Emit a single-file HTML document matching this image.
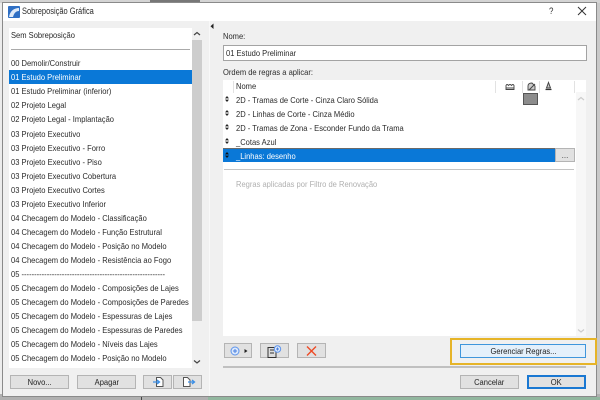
<!DOCTYPE html>
<html><head><meta charset="utf-8">
<style>
html,body{margin:0;padding:0;background:#c4c4c4}
#w{width:600px;height:400px;position:absolute;left:0;top:0;overflow:hidden;background:#c9c9c9;font-family:"Liberation Sans",sans-serif;font-size:8.6px;color:#2a2a2a;filter:blur(.3px)}
div{position:absolute;box-sizing:border-box}
.t{white-space:nowrap;line-height:12px;height:12px;transform:scaleX(.88);transform-origin:0 50%}
.btn{background:#e1e1e1;border:1px solid #b4b4b4;text-align:center;color:#222}
.btn span{display:inline-block;transform:scaleX(.88);white-space:nowrap}
</style></head><body><div id="w">
<div style="left:0;top:0;width:3px;height:400px;background:#ececec"></div>
<div style="left:0;top:0;width:600px;height:3px;background:#d4d4d4"></div>
<div style="left:150px;top:0;width:50px;height:2px;background:#777"></div>
<div style="left:0;top:394px;width:600px;height:6px;background:#b0b0b0"></div>
<div style="left:141px;top:396px;width:1px;height:4px;background:#444"></div>
<div style="left:208px;top:397px;width:392px;height:3px;background:#92b79f"></div>
<div style="left:2px;top:2px;width:595px;height:395px;background:#f0f0f0;border:1px solid #8a8a8a"></div>
<div style="left:3px;top:3px;width:593px;height:18px;background:#fff"></div>

<svg style="position:absolute;left:8px;top:6px" width="12" height="12" viewBox="0 0 12 12"><rect width="12" height="12" rx="1" fill="#2f6fc4"/><path d="M1 11C2 5 6 2 11 2V5C8 5 6 7 5 11Z" fill="#dfeaf8"/></svg>
<div class="t" style="left:22px;top:5px;font-size:9px;transform:scaleX(.83)">Sobreposição Gráfica</div>
<div class="t" style="left:549px;top:5px;font-size:9px">?</div>
<svg style="position:absolute;left:577px;top:6px" width="10" height="10"><path d="M1 1L9 9M9 1L1 9" stroke="#333" stroke-width="1"/></svg>

<!-- left list -->
<div style="left:9px;top:28px;width:183px;height:340px;background:#fff"></div>
<div style="left:192px;top:28px;width:10px;height:340px;background:#f0f0f0"></div>
<div style="left:192px;top:40px;width:10px;height:281px;background:#cdcdcd"></div>
<svg style="position:absolute;left:193px;top:31px" width="9" height="6"><path d="M1 4L4 1.500L7 4" fill="none" stroke="#444" stroke-width="1.200"/></svg>
<svg style="position:absolute;left:193px;top:359px" width="9" height="6"><path d="M1 1.500L4 4L7 1.500" fill="none" stroke="#444" stroke-width="1.200"/></svg>
<div style="left:11px;top:49px;width:179px;height:1px;background:#aaa"></div>
<div style="left:9px;top:70px;width:183px;height:14px;background:#0a78d7"></div>
<div class="t" style="left:11px;top:29px">Sem Sobreposição</div>
<div class="t" style="left:11px;top:57px">00 Demolir/Construir</div>
<div class="t" style="left:11px;top:71px;color:#fff">01 Estudo Preliminar</div>
<div class="t" style="left:11px;top:85px">01 Estudo Preliminar (inferior)</div>
<div class="t" style="left:11px;top:99px">02 Projeto Legal</div>
<div class="t" style="left:11px;top:113px">02 Projeto Legal - Implantação</div>
<div class="t" style="left:11px;top:128px">03 Projeto Executivo</div>
<div class="t" style="left:11px;top:142px">03 Projeto Executivo - Forro</div>
<div class="t" style="left:11px;top:156px">03 Projeto Executivo - Piso</div>
<div class="t" style="left:11px;top:170px">03 Projeto Executivo Cobertura</div>
<div class="t" style="left:11px;top:184px">03 Projeto Executivo Cortes</div>
<div class="t" style="left:11px;top:198px">03 Projeto Executivo Inferior</div>
<div class="t" style="left:11px;top:212px">04 Checagem do Modelo - Classificação</div>
<div class="t" style="left:11px;top:226px">04 Checagem do Modelo - Função Estrutural</div>
<div class="t" style="left:11px;top:240px">04 Checagem do Modelo - Posição no Modelo</div>
<div class="t" style="left:11px;top:254px">04 Checagem do Modelo - Resistência ao Fogo</div>
<div class="t" style="left:11px;top:268px">05 ---------------------------------------------------------</div>
<div class="t" style="left:11px;top:282px">05 Checagem do Modelo - Composições de Lajes</div>
<div class="t" style="left:11px;top:296px">05 Checagem do Modelo - Composições de Paredes</div>
<div class="t" style="left:11px;top:310px">05 Checagem do Modelo - Espessuras de Lajes</div>
<div class="t" style="left:11px;top:324px">05 Checagem do Modelo - Espessuras de Paredes</div>
<div class="t" style="left:11px;top:338px">05 Checagem do Modelo - Níveis das Lajes</div>
<div class="t" style="left:11px;top:352px">05 Checagem do Modelo - Posição no Modelo</div>

<!-- left buttons -->
<div class="btn" style="left:10px;top:375px;width:59px;height:14px;line-height:12px"><span>Novo...</span></div>
<div class="btn" style="left:77px;top:375px;width:59px;height:14px;line-height:12px"><span>Apagar</span></div>
<div class="btn" style="left:143px;top:375px;width:29px;height:14px"></div>
<div class="btn" style="left:173px;top:375px;width:29px;height:14px"></div>
<svg style="position:absolute;left:152px;top:376px" width="14" height="12"><path d="M4.500 1.500H8.500L11 4V10.500H4.500Z" fill="#fff" stroke="#555"/><path d="M1 6H7M5 4L7.500 6L5 8" fill="none" stroke="#3a8ee6" stroke-width="1.300"/></svg>
<svg style="position:absolute;left:182px;top:376px" width="16" height="12"><path d="M1.500 1.500H5.500L8 4V10.500H1.500Z" fill="#fff" stroke="#555"/><path d="M6 6H12M10 4L12.500 6L10 8" fill="none" stroke="#3a8ee6" stroke-width="1.300"/></svg>

<!-- divider arrow -->
<div style="left:209px;top:21px;width:1px;height:375px;background:#f8f8f8"></div>
<svg style="position:absolute;left:210px;top:23px" width="4" height="7"><path d="M3.500 .5V6L.5 3.200Z" fill="#222"/></svg>

<!-- right -->
<div class="t" style="left:223px;top:30px">Nome:</div>
<div style="left:223px;top:45px;width:364px;height:16px;background:#fff;border:1px solid #a3a3a3"></div>
<div class="t" style="left:226px;top:47px">01 Estudo Preliminar</div>
<div class="t" style="left:223px;top:66px">Ordem de regras a aplicar:</div>

<div style="left:223px;top:80px;width:363px;height:256px;background:#fff"></div>
<div style="left:576px;top:92px;width:10px;height:244px;background:#f7f7f7"></div>
<div style="left:233px;top:81px;width:1px;height:12px;background:#e2e2e2"></div>
<div style="left:495px;top:81px;width:1px;height:12px;background:#e2e2e2"></div>
<div style="left:522px;top:81px;width:1px;height:12px;background:#e2e2e2"></div>
<div style="left:539px;top:81px;width:1px;height:12px;background:#e2e2e2"></div>
<div style="left:574px;top:81px;width:1px;height:12px;background:#e2e2e2"></div>
<div class="t" style="left:236px;top:80px">Nome</div>

<svg style="position:absolute;left:505px;top:82px" width="10" height="9"><path d="M1 7.500V3.500Q2 1.500 3.500 3.500Q5 1.500 6.500 3.500Q8 1.500 9 3.500V7.500Z" fill="#fff" stroke="#444" stroke-width=".9"/><path d="M1 6H9" stroke="#444"/></svg>
<svg style="position:absolute;left:527px;top:82px" width="10" height="9"><path d="M1 8V4Q1 1 5 1L8 4V8Z" fill="#ccc" stroke="#444" stroke-width=".9"/><path d="M2 8L8 2" stroke="#444"/></svg>
<svg style="position:absolute;left:544px;top:81px" width="9" height="10"><path d="M4.500 1.500L6.500 7H2.500Z" fill="#ccc" stroke="#444"/><path d="M1.500 8.500H7.500" stroke="#333" stroke-width="1.200"/></svg>
<div style="left:523px;top:93px;width:15px;height:12px;background:#8c8c8c;border:1px solid #555"></div>

<svg style="position:absolute;left:225px;top:96px" width="4" height="6"><path d="M2 0L4 2.400H0ZM2 6L0 3.600H4Z" fill="#222"/></svg>
<svg style="position:absolute;left:225px;top:110px" width="4" height="6"><path d="M2 0L4 2.400H0ZM2 6L0 3.600H4Z" fill="#222"/></svg>
<svg style="position:absolute;left:225px;top:124px" width="4" height="6"><path d="M2 0L4 2.400H0ZM2 6L0 3.600H4Z" fill="#222"/></svg>
<svg style="position:absolute;left:225px;top:138px" width="4" height="6"><path d="M2 0L4 2.400H0ZM2 6L0 3.600H4Z" fill="#222"/></svg>

<div class="t" style="left:236px;top:94px">2D - Tramas de Corte - Cinza Claro Sólida</div>
<div class="t" style="left:236px;top:108px">2D - Linhas de Corte - Cinza Médio</div>
<div class="t" style="left:236px;top:122px">2D - Tramas de Zona - Esconder Fundo da Trama</div>
<div class="t" style="left:236px;top:136px">_Cotas Azul</div>

<div style="left:223px;top:148px;width:332px;height:14px;background:#0a78d7;border-top:1px solid #6a6a6a"></div>
<svg style="position:absolute;left:225px;top:152px" width="4" height="6"><path d="M2 0L4 2.400H0ZM2 6L0 3.600H4Z" fill="#111"/></svg>
<div class="t" style="left:236px;top:150px;color:#fff">_Linhas: desenho</div>
<div class="btn" style="left:555px;top:148px;width:20px;height:14px;line-height:13px;font-size:8px;color:#444">...</div>
<div style="left:224px;top:169px;width:350px;height:1px;background:#c4c4c4"></div>
<div class="t" style="left:236px;top:178px;color:#b0b0b0">Regras aplicadas por Filtro de Renovação</div>
<svg style="position:absolute;left:577px;top:96px" width="9" height="6"><path d="M1 4L4 1.500L7 4" fill="none" stroke="#ccc" stroke-width="1.200"/></svg>
<svg style="position:absolute;left:577px;top:328px" width="9" height="6"><path d="M1 1.500L4 4L7 1.500" fill="none" stroke="#ccc" stroke-width="1.200"/></svg>

<!-- bottom-right tools -->
<div class="btn" style="left:224px;top:343px;width:28px;height:15px"></div>
<svg style="position:absolute;left:230px;top:346px" width="20" height="10"><circle cx="5" cy="5" r="4" fill="#dbe8fb" stroke="#5d94ec"/><path d="M3 5H7M5 3V7" stroke="#4a80e0"/><path d="M14.500 3L17.500 5L14.500 7Z" fill="#222"/></svg>
<div class="btn" style="left:260px;top:343px;width:29px;height:15px"></div>
<svg style="position:absolute;left:267px;top:345px" width="16" height="13"><rect x="1" y="2.500" width="8" height="10" fill="#ddd" stroke="#333"/><path d="M3 5H7M3 8H7" stroke="#333"/><circle cx="10.500" cy="4" r="3.200" fill="#dbe8fb" stroke="#5d94ec"/><path d="M9 4H12M10.500 2.500V5.500" stroke="#4a80e0"/></svg>
<div class="btn" style="left:297px;top:343px;width:29px;height:15px"></div>
<svg style="position:absolute;left:306px;top:346px" width="11" height="10"><path d="M1 .5L10 9.500M10 .5L1 9.500" stroke="#ee4a25" stroke-width="1.400"/></svg>

<!-- highlight -->
<div style="left:450px;top:338px;width:147px;height:27px;border:2px solid #e6b428"></div>
<div class="btn" style="left:460px;top:344px;width:126px;height:14px;background:#e4f0fb;border:1px solid #3f96dc;line-height:12px"><span>Gerenciar Regras...</span></div>

<div style="left:223px;top:366px;width:363px;height:2px;background:#c0c0c0"></div>
<div class="btn" style="left:460px;top:375px;width:59px;height:14px;line-height:12px"><span>Cancelar</span></div>
<div class="btn" style="left:527px;top:375px;width:59px;height:14px;line-height:11px;border:2px solid #1a78d2"><span>OK</span></div>
</div></body></html>
